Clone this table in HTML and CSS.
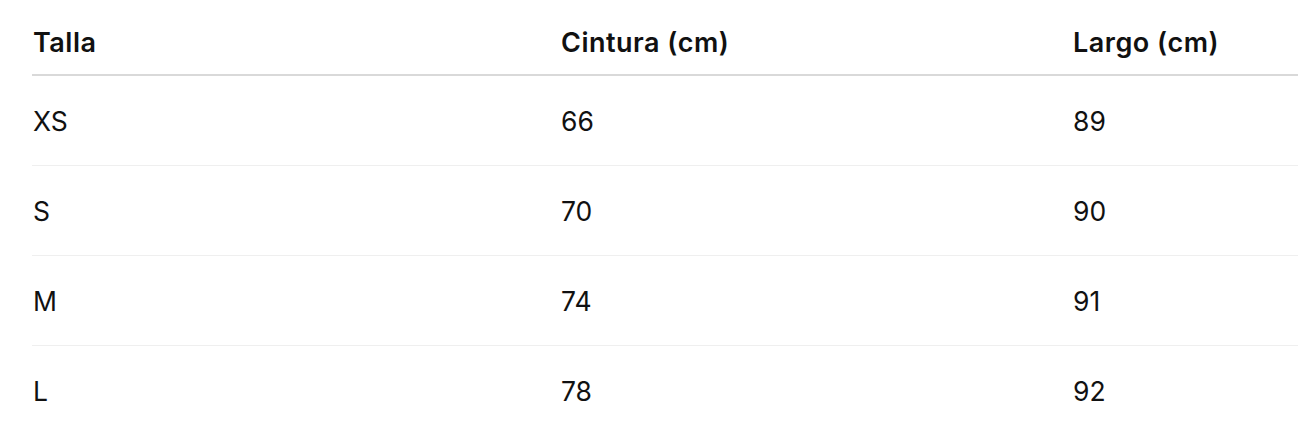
FILE: index.html
```html
<!DOCTYPE html>
<html lang="es">
<head>
<meta charset="utf-8">
<title>Tallas</title>
<link rel="stylesheet" href="styles.css">
</head>
<body>
<table class="size-table">
  <colgroup>
    <col class="col-size">
    <col class="col-waist">
    <col class="col-length">
  </colgroup>
  <thead>
    <tr><th>Talla</th><th>Cintura (cm)</th><th>Largo (cm)</th></tr>
  </thead>
  <tbody>
    <tr><td>XS</td><td>66</td><td>89</td></tr>
    <tr><td>S</td><td>70</td><td>90</td></tr>
    <tr><td>M</td><td>74</td><td>91</td></tr>
    <tr><td>L</td><td>78</td><td>92</td></tr>
  </tbody>
</table>
</body>
</html>
```

FILE: styles.css
```css
html, body {
  margin: 0;
  padding: 0;
  background: #ffffff;
}
body {
  font-family: Inter, "Liberation Sans", sans-serif;
  color: #111111;
  overflow: hidden;
}
.size-table {
  margin-left: 32px;
  width: calc(100% - 32px);
  border-collapse: collapse;
  table-layout: fixed;
  font-size: 26px;
}
.col-size { width: 528px; }
.col-waist { width: 512px; }
.size-table th,
.size-table td {
  text-align: left;
  padding: 0 0 0 1px;
  line-height: 40px;
}
.size-table th {
  font-weight: 600;
  font-size: 27px;
  letter-spacing: 0.5px;
  padding-top: 23px;
  padding-bottom: 11px;
  border-bottom: 2px solid #d9d9d9;
}
.size-table td {
  font-weight: 400;
  font-size: 26.5px;
  padding-top: 25px;
  padding-bottom: 24px;
  border-bottom: 1px solid #efefef;
}
.size-table tbody tr:last-child td {
  border-bottom: none;
}
```
